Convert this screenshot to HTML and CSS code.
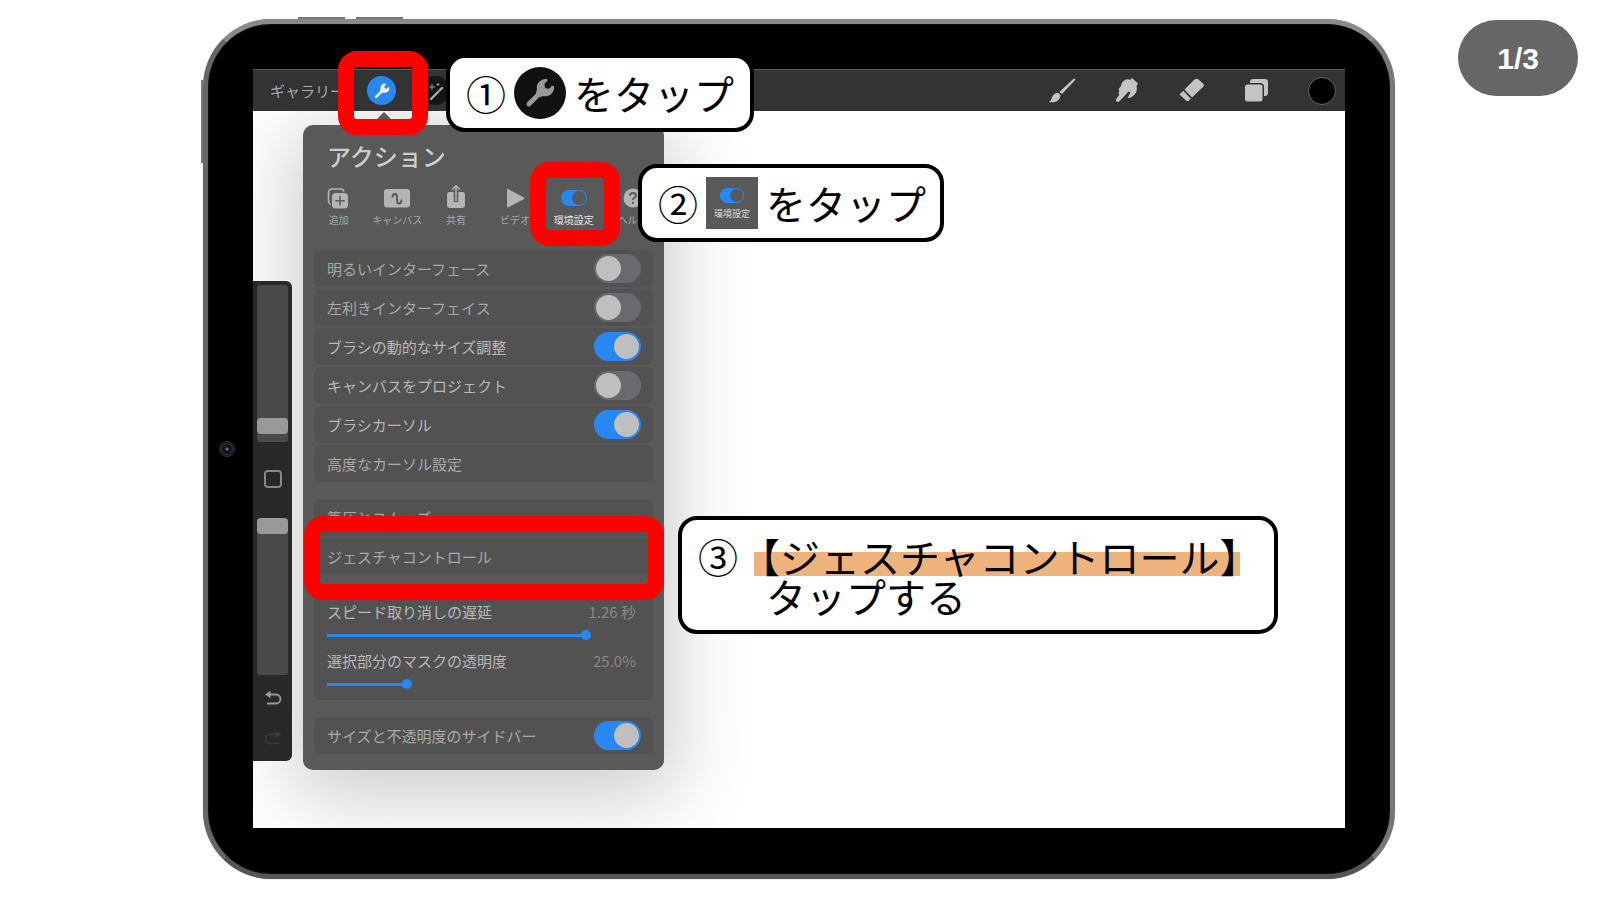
FILE: index.html
```
<!DOCTYPE html>
<html lang="ja">
<head>
<meta charset="utf-8">
<title>ジェスチャコントロール</title>
<link rel="stylesheet" href="styles.css">
</head>
<body>
<svg class="defs" aria-hidden="true">
  <symbol id="wrench" viewBox="0 0 24 24">
    <path d="M4.2 19.8L13 11" stroke="currentColor" stroke-width="3.4" stroke-linecap="round"/>
    <path d="M17 2.2A6.2 6.2 0 0 0 9.8 9.6L9 12.5L11.7 15L14.3 14.2A6.2 6.2 0 0 0 21.8 7L20.4 6.8Q18.6 10 15.8 8.4Q14 5.6 17.2 3.6Z" fill="currentColor"/>
  </symbol>
  <symbol id="prefs" viewBox="0 0 28 18">
    <rect x="1" y="1" width="26" height="16" rx="8" fill="#2787f3"/>
    <circle cx="19" cy="9" r="7" fill="#595959"/>
  </symbol>
</svg>

<main class="stage">
  <div class="device">
    <span class="hw volume-up"></span><span class="hw volume-down"></span><span class="hw power"></span>
    <span class="camera"></span>
    <div class="screen">
      <header class="toolbar">
        <button class="gallery">ギャラリー</button>
        <button class="round active" aria-label="アクション"><svg width="18" height="18"><use href="#wrench"/></svg></button>
        <button class="round magic" aria-label="調整"><svg width="20" height="20" viewBox="0 0 20 20"><path d="M5 18L12 11M13.500 9.500L16 7" stroke="#aaa" stroke-width="2.400" stroke-linecap="round"/><path d="M6 3v6M3 6h6M12 2v3M10.500 3.500h3" stroke="#999" stroke-width="1"/></svg></button>
        <div class="tools">
          <button class="tool" aria-label="ブラシ"><svg width="28" height="28" viewBox="0 0 28 28" fill="#c4c4c4"><path d="M27 1.500Q28 2 27 3.200L14 17L11.300 15L25 2.300Q26.300 1.100 27 1.500Z"/><path d="M10.300 16L12.500 18Q12 23.500 7 25Q3.500 25.500 1 25Q3.500 23.500 4.200 20Q6 15.500 10.300 16Z"/></svg></button>
          <button class="tool" aria-label="ぼかし"><svg width="28" height="28" viewBox="0 0 28 28" fill="#c4c4c4"><path d="M19 1L25 6.500L23.500 9Q25 15 20 19Q17.500 21.500 14.500 21L17.500 15.500L15.500 14.500L10 20.500L5.500 25Q3 25.500 2.800 22.500L6.500 17.500Q4.500 16 6.500 14L5.500 12L8 9Q8.500 4.500 12 3Q15 1.500 17 3Z"/></svg></button>
          <button class="tool" aria-label="消しゴム"><svg width="28" height="28" viewBox="0 0 28 28" fill="#c4c4c4"><path d="M16.500 2.500Q18.500 1 20.500 2.500L25.500 7Q26.500 8 25.500 9.500L14 20.500L6.500 12.500Z"/><path d="M5.300 13.700L12.800 21.700L11 23.500Q9.500 24.500 8 23.500L1.500 17.500Z"/></svg></button>
          <button class="tool" aria-label="レイヤー"><svg width="28" height="28" viewBox="0 0 28 28" fill="#c4c4c4"><path d="M10 2h12q3 0 3 3v11q0 3-3 3h-1V10q0-4-4-4H7V5q0-3 3-3Z"/><rect x="2" y="7.500" width="17.500" height="17" rx="2.500"/></svg></button>
          <button class="tool color" aria-label="カラー"></button>
        </div>
      </header>

      <div class="workspace">
        <aside class="sidebar">
          <input class="vertical" type="range" min="0" max="100" value="6" aria-label="ブラシサイズ">
          <button class="modify" aria-label="変更"></button>
          <input class="vertical" type="range" min="0" max="100" value="100" aria-label="不透明度">
          <button class="history" aria-label="取り消す"><svg width="18" height="16" viewBox="0 0 18 16"><path d="M4 4.500H12A4.500 4.500 0 0 1 12 13.500H3" fill="none" stroke="#999" stroke-width="1.800"/><path d="M1 4.500L6.500 .8V8.200Z" fill="#999"/></svg></button>
          <button class="history" aria-label="やり直す"><svg width="18" height="16" viewBox="0 0 18 16"><path d="M14 4.500H6A4.500 4.500 0 0 0 6 13.500H15" fill="none" stroke="#3c3c3c" stroke-width="1.600"/><path d="M17 4.500L11.500 .8V8.200Z" fill="#3c3c3c"/></svg></button>
        </aside>

        <section class="panel">
          <h1 class="title">アクション</h1>
          <nav class="tabs">
            <button class="tab"><svg width="24" height="26" viewBox="0 0 24 26"><path d="M18 6.500Q17.500 4 14.500 4H6Q2.500 4 2.500 8V15.500Q2.500 18.500 4.500 19.500" fill="none" stroke="#b4b4b4" stroke-width="1.600"/><rect x="6" y="8" width="16" height="15.500" rx="3.500" fill="#b4b4b4"/><path d="M14 11v9.500M9.300 15.700h9.500" stroke="#595959" stroke-width="1.500"/></svg>追加</button>
            <button class="tab"><svg width="26" height="26" viewBox="0 0 26 26"><rect y="4" width="26" height="18.500" rx="3" fill="#b4b4b4"/><path d="M8.500 12.500Q8.500 9 11 9Q13 9 13 12V15.500Q13 18.500 15.200 18.500Q17.500 18.500 17.500 14.500" fill="none" stroke="#595959" stroke-width="1.900"/></svg>キャンバス</button>
            <button class="tab"><svg width="24" height="26" viewBox="0 0 24 26"><rect x="3" y="7" width="18" height="16" rx="3" fill="#b4b4b4"/><path d="M12 5v12" stroke="#595959" stroke-width="4.500"/><path d="M12 16V1M8 4.800L12 .8L16 4.800" fill="none" stroke="#b4b4b4" stroke-width="1.500"/></svg>共有</button>
            <button class="tab"><svg width="24" height="26" viewBox="0 0 24 26"><path d="M4 4.500Q4 3.500 5.500 4.200L21 12.500Q22 13.200 21 14L5.500 22.200Q4 23 4 21.500Z" fill="#b4b4b4"/></svg>ビデオ</button>
            <button class="tab selected"><svg width="28" height="26" viewBox="0 -4 28 26"><use href="#prefs" width="28" height="18"/></svg>環境設定</button>
            <button class="tab"><svg width="24" height="26" viewBox="0 0 24 26"><circle cx="12" cy="13" r="9.500" fill="#b4b4b4"/><path d="M9 10.800Q9 8 12 8Q15 8 15 10.500Q15 12 13 13Q12 13.700 12 15M12 16.800v2" fill="none" stroke="#595959" stroke-width="1.900"/></svg>ヘルプ</button>
          </nav>

          <div class="group">
            <label class="row">明るいインターフェース<input class="switch" type="checkbox"></label>
            <label class="row">左利きインターフェイス<input class="switch" type="checkbox"></label>
            <label class="row bright">ブラシの動的なサイズ調整<input class="switch" type="checkbox" checked></label>
            <label class="row bright">キャンバスをプロジェクト<input class="switch" type="checkbox"></label>
            <label class="row bright">ブラシカーソル<input class="switch" type="checkbox" checked></label>
            <button class="row">高度なカーソル設定</button>
          </div>
          <div class="group">
            <button class="row">筆圧とスムーズ</button>
            <button class="row">ジェスチャコントロール</button>
          </div>
          <div class="group sliders">
            <div class="setting">
              <label for="delay">スピード取り消しの遅延</label><output for="delay">1.26 秒</output>
              <input id="delay" class="slider" type="range" min="0" max="100" value="85" style="--fill: 85%">
            </div>
            <div class="setting">
              <label for="mask">選択部分のマスクの透明度</label><output for="mask">25.0%</output>
              <input id="mask" class="slider" type="range" min="0" max="100" value="25" style="--fill: 25%">
            </div>
          </div>
          <div class="group">
            <label class="row">サイズと不透明度のサイドバー<input class="switch" type="checkbox" checked></label>
          </div>
        </section>
      </div>

      <span class="mark mark-wrench"></span>
      <span class="mark mark-prefs"></span>
      <span class="mark mark-gesture"></span>

      <div class="callout callout-1">
        <span>①</span>
        <span class="chip-round"><svg width="34" height="34"><use href="#wrench"/></svg></span>
        <span>をタップ</span>
      </div>
      <div class="callout callout-2">
        <span>②</span>
        <span class="chip-square"><svg width="26" height="17"><use href="#prefs"/></svg>環境設定</span>
        <span>をタップ</span>
      </div>
      <div class="callout callout-3">
        <span>③</span>
        <p class="steps"><span class="highlight">【ジェスチャコントロール】</span><span class="second">タップする</span></p>
      </div>
    </div>
  </div>
  <div class="counter">1/3</div>
</main>
</body>
</html>
```
FILE: styles.css
```
* {
  box-sizing: border-box;
}

body {
  margin: 0;
  background: #fff;
  font-family: "Noto Sans CJK JP", sans-serif;
}

button {
  padding: 0;
  border: 0;
  background: none;
  color: inherit;
  font: inherit;
}

svg {
  display: block;
  flex: none;
}

.defs {
  position: absolute;
  width: 0;
  height: 0;
}

.stage {
  position: relative;
  display: flex;
  min-height: 100vh;
  padding: 19px 203px 20px;
}

/* Tablet */
.device {
  position: relative;
  display: flex;
  flex: 1;
  padding: 45px 45px 46px;
  border: 5px solid #606060;
  border-color: #8a8a8a #777 #555 #666;
  border-radius: 68px;
  background: #000;
  box-shadow: inset 0 0 2px #333, 0 0 1px #999;
}

.hw {
  position: absolute;
  background: #777;
}

.volume-up,
.volume-down {
  top: -7px;
  width: 47px;
  height: 2px;
}

.volume-up {
  left: 90px;
}

.volume-down {
  left: 148px;
}

.power {
  top: 56px;
  left: -7px;
  width: 2px;
  height: 83px;
}

.camera {
  position: absolute;
  top: 417px;
  left: 11px;
  width: 16px;
  height: 16px;
  border: 3px double #333;
  border-radius: 50%;
  background: radial-gradient(#4a78a0 0 1px, #151515 2px);
}

.screen {
  position: relative;
  display: flex;
  flex: 1;
  flex-direction: column;
  background: #fff;
}

/* Top bar */
.toolbar {
  position: relative;
  z-index: 1;
  display: flex;
  align-items: center;
  height: 42px;
  padding: 0 9px 0 17px;
  border-top: 1px solid #5a5a5a;
  background: #333;
}

.gallery {
  width: 97px;
  color: #aaa;
  font-size: 15px;
  text-align: left;
}

.round {
  display: grid;
  place-items: center;
  width: 29px;
  height: 29px;
  border-radius: 50%;
}

.round.active {
  margin-right: 25px;
  background: #2787f3;
  color: #eee;
}

.round.magic {
  background: #151515;
}

.tools {
  display: flex;
  gap: 37px;
  margin-left: auto;
}

.tool {
  width: 28px;
  height: 28px;
}

.tool.color {
  border: 1px solid #666;
  border-radius: 50%;
  background: #000;
}

.workspace {
  position: relative;
  display: flex;
  flex: 1;
  align-items: flex-start;
  gap: 11px;
  overflow: hidden;
}

/* Brush sidebar */
.sidebar {
  position: relative;
  z-index: 1;
  display: flex;
  flex-direction: column;
  align-items: center;
  width: 39px;
  margin-top: 170px;
  padding: 4px 4px 15px;
  border-radius: 0 6px 6px 0;
  background: #282828;
}

.vertical {
  appearance: none;
  writing-mode: vertical-lr;
  direction: rtl;
  width: 31px;
  height: 157px;
  margin: 0;
  border-radius: 3px;
  background: #4a4a4a;
}

.vertical::-webkit-slider-thumb {
  appearance: none;
  width: 31px;
  height: 16px;
  border-radius: 4px;
  background: #999;
}

.modify {
  width: 18px;
  height: 18px;
  margin: 28px 0 30px;
  border: 2px solid #888;
  border-radius: 4px;
}

.history {
  margin-top: 15px;
}

.history + .history {
  margin-top: 24px;
}

/* Actions panel */
.panel {
  position: relative;
  width: 361px;
  margin-top: 14px;
  padding: 13px 11px 16px;
  border-radius: 10px;
  background: #595959;
  color: #a8a8a8;
  font-size: 15px;
  box-shadow: 0 16px 80px 12px rgba(0, 0, 0, .2);
}

.panel::before {
  content: "";
  position: absolute;
  top: -13px;
  left: 68px;
  border: 13px solid transparent;
  border-top: 0;
  border-bottom-color: #595959;
}

.title {
  margin: 0 0 11px 13px;
  color: #ccc;
  font-size: 24px;
  font-weight: 500;
  line-height: 36px;
}

.tabs {
  display: grid;
  grid-template-columns: repeat(6, 1fr);
  margin: 0 -9px 23px -5px;
}

.tab {
  display: flex;
  flex-direction: column;
  align-items: center;
  gap: 2px;
  font-size: 10px;
  line-height: 14px;
  white-space: nowrap;
}

.tab.selected {
  color: #e4e4e4;
}

.group {
  display: grid;
  gap: 2px;
  margin-bottom: 17px;
}

.group:last-child {
  margin-bottom: 0;
}

.row {
  display: flex;
  align-items: center;
  justify-content: space-between;
  height: 37px;
  padding: 0 12px 0 13px;
  border-radius: 6px;
  background: #525252;
  text-align: left;
}

.bright {
  color: #b8b8b8;
}

.switch {
  appearance: none;
  width: 47px;
  height: 29px;
  margin: 0;
  padding: 2px;
  border-radius: 15px;
  background: #6b696d;
}

.switch::before {
  content: "";
  display: block;
  width: 25px;
  height: 25px;
  border-radius: 50%;
  background: #bfbfbf;
}

.switch:checked {
  background: #2787f3;
}

.switch:checked::before {
  margin-left: auto;
}

.sliders {
  gap: 10px;
  padding: 9px 17px 11px 13px;
  border-radius: 6px;
  background: #525252;
}

.setting {
  display: grid;
  grid-template-columns: 1fr auto;
  row-gap: 7px;
  color: #b8b8b8;
  line-height: 22px;
}

.setting output {
  color: #888;
}

.slider {
  grid-column: 1 / -1;
  appearance: none;
  width: 100%;
  height: 10px;
  margin: 0;
  background: linear-gradient(#2787f3, #2787f3) left center / var(--fill) 3px no-repeat;
}

.slider::-webkit-slider-thumb {
  appearance: none;
  width: 10px;
  height: 10px;
  border-radius: 50%;
  background: #2787f3;
}

/* Tutorial overlays */
.mark {
  position: absolute;
  z-index: 2;
  width: 90px;
  height: 84px;
  border: 16px solid #f00;
  border-radius: 19px;
}

.mark-wrench {
  top: -18px;
  left: 85px;
}

.mark-prefs {
  top: 93px;
  left: 277px;
}

.mark-gesture {
  top: 447px;
  left: 51px;
  width: 360px;
}

.callout {
  position: absolute;
  z-index: 3;
  display: flex;
  align-items: center;
  height: 78px;
  padding: 0 15px;
  border: 4px solid #000;
  border-radius: 19px;
  background: #fff;
  color: #000;
  font-size: 40px;
  line-height: 40px;
  white-space: nowrap;
}

.callout-1 {
  top: -15px;
  left: 193px;
  gap: 8px;
  width: 308px;
  padding-left: 16px;
}

.callout-2 {
  top: 95px;
  left: 385px;
  gap: 8px;
  width: 306px;
  padding-left: 16px;
}

.callout-3 {
  top: 447px;
  left: 425px;
  align-items: flex-start;
  gap: 16px;
  width: 600px;
  height: auto;
  padding: 16px 16px 14px;
}

.chip-round,
.chip-square {
  display: grid;
  flex: none;
  place-items: center;
  width: 52px;
  height: 52px;
}

.chip-round {
  border-radius: 50%;
  background: #111;
  color: #999;
}

.chip-square {
  align-content: center;
  gap: 4px;
  background: #595959;
  color: #ddd;
  font-size: 9px;
  line-height: 12px;
}

.steps {
  display: grid;
  justify-items: start;
  margin: 0;
}

.highlight {
  background: linear-gradient(#eeb27c, #eeb27c) left bottom / calc(100% - 20px) 24px no-repeat;
  text-indent: -14px;
}

.second {
  padding-left: 12px;
}

.counter {
  position: absolute;
  top: 20px;
  right: 20px;
  padding: 21px 39px 19px;
  border-radius: 38px;
  background: #666;
  color: #fff;
  font: bold 30px/36px "Liberation Sans", Arial, sans-serif;
}
```
